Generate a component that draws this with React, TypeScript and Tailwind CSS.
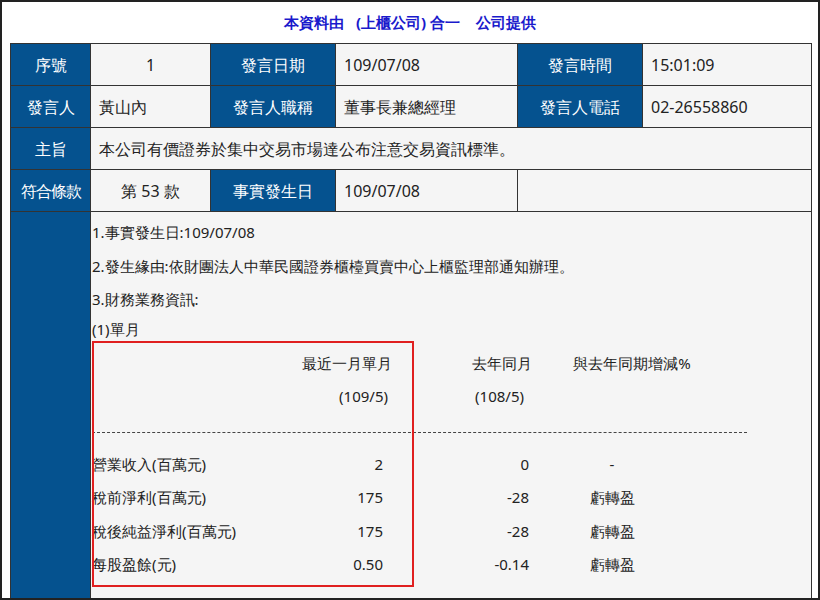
const hd = 'bg-[#05528f] text-white text-center border border-[#333]'
const cl = 'bg-[#f5f5f5] text-[#222] border border-[#333] px-2'

const rows = [
  ['營業收入(百萬元)', '2', '0', '-'],
  ['稅前淨利(百萬元)', '175', '-28', '虧轉盈'],
  ['稅後純益淨利(百萬元)', '175', '-28', '虧轉盈'],
  ['每股盈餘(元)', '0.50', '-0.14', '虧轉盈'],
]

export default function App() {
  return (
    <div className="w-[820px] h-[600px] overflow-hidden bg-white border-2 border-[#222] font-['Liberation_Sans','Noto_Sans_CJK_TC',sans-serif] text-[16px]">
      <div className="h-[41px] flex items-center justify-center text-[#1a1acc] font-bold text-[15px]">
        本資料由&nbsp;&nbsp;&nbsp;(上櫃公司) 合一&nbsp;&nbsp;&nbsp;&nbsp;公司提供
      </div>
      <table className="ml-[8px] w-[802px] border-collapse table-fixed">
        <colgroup>
          <col className="w-[80px]" />
          <col className="w-[120px]" />
          <col className="w-[125px]" />
          <col className="w-[182px]" />
          <col className="w-[125px]" />
          <col />
        </colgroup>
        <tbody>
          <tr className="h-[42px]">
            <td className={hd}>序號</td>
            <td className={cl + ' text-center'}>1</td>
            <td className={hd}>發言日期</td>
            <td className={cl}>109/07/08</td>
            <td className={hd}>發言時間</td>
            <td className={cl}>15:01:09</td>
          </tr>
          <tr className="h-[42px]">
            <td className={hd}>發言人</td>
            <td className={cl}>黃山內</td>
            <td className={hd}>發言人職稱</td>
            <td className={cl}>董事長兼總經理</td>
            <td className={hd}>發言人電話</td>
            <td className={cl}>02-26558860</td>
          </tr>
          <tr className="h-[42px]">
            <td className={hd}>主旨</td>
            <td className={cl} colSpan={5}>本公司有價證券於集中交易市場達公布注意交易資訊標準。</td>
          </tr>
          <tr className="h-[42px]">
            <td className={hd + ' tracking-[-1px] px-0'}>符合條款</td>
            <td className={cl + ' text-center'}>第 53 款</td>
            <td className={hd}>事實發生日</td>
            <td className={cl}>109/07/08</td>
            <td className="bg-[#f5f5f5] border border-[#333]" colSpan={2}></td>
          </tr>
          <tr>
            <td className={hd + ' align-top'}></td>
            <td colSpan={5} className="bg-[#f5f5f5] border border-[#333] align-top p-0 h-[400px]">
              <div className="pl-[1px] pt-[4px] font-['Liberation_Serif','Noto_Sans_CJK_TC',serif] text-[15px] text-[#222] leading-[33.5px]">
                <div>1.事實發生日:109/07/08</div>
                <div>2.發生緣由:依財團法人中華民國證券櫃檯買賣中心上櫃監理部通知辦理。</div>
                <div>3.財務業務資訊:</div>
                <div className="leading-[24px]">(1)單月</div>
                <div className="relative w-[655px]">
                  <div className="absolute left-0 top-0 w-[322px] h-[246px] border-2 border-[#e02020]" />
                  <div className="flex pt-[6px]">
                    <div className="w-[180px]" />
                    <div className="w-[120px] text-right">最近一月單月</div>
                    <div className="w-[140px] text-right">去年同月</div>
                    <div className="w-[200px] text-center">與去年同期增減%</div>
                  </div>
                  <div className="flex">
                    <div className="w-[210px]" />
                    <div className="w-[86px] text-right">(109/5)</div>
                    <div className="w-[136px] text-right">(108/5)</div>
                  </div>
                  <div className="mt-[18px] border-t border-dashed border-[#444]" />
                  <div className="pt-[15px]">
                    {rows.map((r) => (
                      <div key={r[0]} className="flex">
                        <div className="w-[200px]">{r[0]}</div>
                        <div className="w-[91px] text-right">{r[1]}</div>
                        <div className="w-[146px] text-right">{r[2]}</div>
                        <div className="w-[166px] text-center">{r[3]}</div>
                      </div>
                    ))}
                  </div>
                </div>
              </div>
            </td>
          </tr>
        </tbody>
      </table>
    </div>
  )
}
